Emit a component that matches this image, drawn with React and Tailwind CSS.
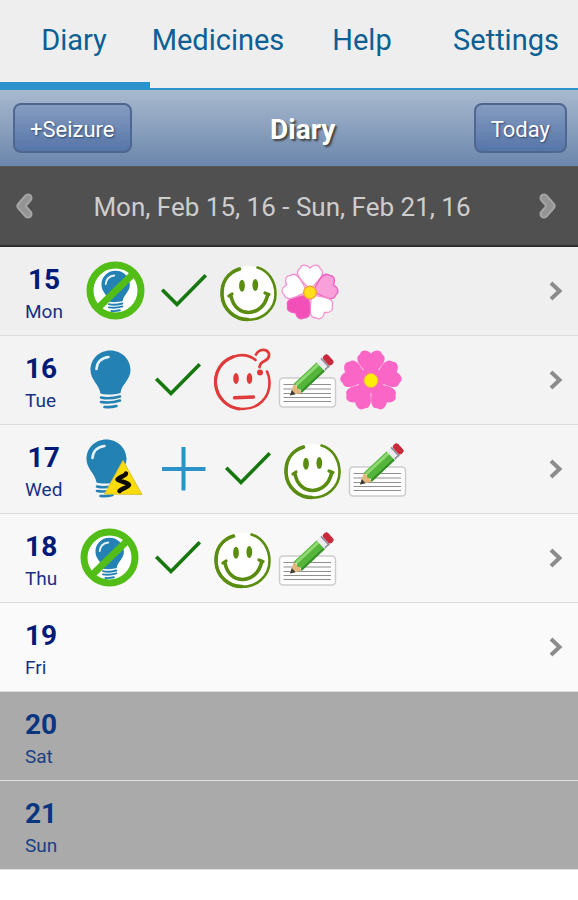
import React from 'react';

const TABS = ['Diary', 'Medicines', 'Help', 'Settings'];

const DAYS = [
  { date: 15, weekday: 'Mon', icons: ['noSeizure', 'check', 'happy', 'mixedFlower'], bg: 'bg-[#efefef]' },
  { date: 16, weekday: 'Tue', icons: ['bulb', 'check', 'unsure', 'note', 'flower'], bg: 'bg-[#f3f3f3]' },
  { date: 17, weekday: 'Wed', icons: ['seizure', 'plus', 'check', 'happy', 'note'], bg: 'bg-[#f5f5f5]' },
  { date: 18, weekday: 'Thu', icons: ['noSeizure', 'check', 'happy', 'note'], bg: 'bg-[#f8f8f8]' },
  { date: 19, weekday: 'Fri', icons: [], bg: 'bg-[#fafafa]' },
  { date: 20, weekday: 'Sat', icons: [], future: true },
  { date: 21, weekday: 'Sun', icons: [], future: true },
];

const BulbShape = () => (
  <g>
    <path
      d="M30.3 .5C18.500 .5 10.500 9.500 10.500 20C10.500 30 19 34 20.500 43.500C26 45.500 35 44.500 40.500 43C41.500 34 50.500 30 50.500 20C50.500 9.500 42 .5 30.300 .5Z"
      fill="#2382b3"
    />
    <path d="M16.500 19C17 12 21.500 8 28.500 7" fill="none" stroke="#e8f3f8" strokeWidth="2.600" strokeLinecap="round" />
    <path
      d="M21 47.500Q29 49.500 40 46.500M21 52Q31 53.500 40 50.500M24.500 57Q31 57.500 36.500 56"
      fill="none"
      stroke="#2382b3"
      strokeWidth="2.600"
      strokeLinecap="round"
    />
  </g>
);

const Bulb = () => <BulbShape />;

const NoSeizure = () => (
  <g>
    <circle cx="29.500" cy="29.500" r="25.500" fill="#fff" />
    <g transform="translate(8 9.500) scale(.71)">
      <BulbShape />
    </g>
    <path d="M12 47L47.500 12.500" stroke="#52bd17" strokeWidth="7" />
    <circle cx="29.500" cy="29.500" r="25.500" fill="none" stroke="#52bd17" strokeWidth="7" />
  </g>
);

const Seizure = () => (
  <g>
    <g transform="translate(-9 0)">
      <BulbShape />
    </g>
    <path d="M38 21.500L57 55.500L19.500 55Z" fill="#f9dc0b" stroke="#d9c23a" strokeWidth="1" strokeLinejoin="round" />
    <path
      d="M41 34.500C40.500 37 34 38 32.500 40.500C34 42.500 44 43.500 44 46C43 48.500 36 49.500 34.500 52"
      fill="none"
      stroke="#0c0a02"
      strokeWidth="4.500"
      strokeLinecap="round"
      strokeLinejoin="round"
    />
  </g>
);

const Check = () => (
  <path d="M9.500 30L23 43.500L50.500 15.500" fill="none" stroke="#16770f" strokeWidth="3.600" strokeLinecap="square" />
);

const Plus = () => <path d="M9 30H52.500M30.500 8V51.500" fill="none" stroke="#2b93c8" strokeWidth="4" />;

const Happy = () => (
  <g fill="none" stroke="#5b8c12" strokeLinecap="round">
    <circle cx="29.500" cy="32" r="27" fill="#fff" stroke="none" />
    <path d="M20.500 8C9 12 2.700 21 3 33C3.500 48 15 58.700 29.500 58.700C44 58.700 56.500 48 56.500 33C56.500 20 49 9.500 38.500 6.500" strokeWidth="2.600" />
    <path d="M20.500 8C8 12 2.500 22 3 34C4 49 16 58.500 29 58.500" strokeWidth="3.600" />
    <path d="M12 35C14 45.500 21 51.500 29.500 51.500C38.500 51.500 46 45 48.500 34.500" strokeWidth="3.600" />
    <path d="M10 35L13 33M46 32L50 33.500" strokeWidth="3.200" />
    <ellipse cx="23" cy="24.700" rx="2.900" ry="6" fill="#5b8c12" stroke="none" />
    <ellipse cx="36.300" cy="24" rx="2.900" ry="6" fill="#5b8c12" stroke="none" />
  </g>
);

const Unsure = () => (
  <g fill="none" stroke="#e03a3a" strokeLinecap="round">
    <path d="M42.500 10C37 5.500 31 4.500 25 5.500C11 8 2 19 2.500 33C3.500 48 15 59 29.500 59C45 59 57 48 56.500 32C56.500 28 55.500 24.500 54 21.500" strokeWidth="2.600" />
    <path d="M20 7C8 11 2 22 2.500 34C4 48 14 57 26 59" strokeWidth="3.200" />
    <path d="M43 4.500C45 0 50 -1 53.500 .5C58 4 56 9 51.500 11C48 12.500 47 14 46.500 17" strokeWidth="2.800" />
    <circle cx="47" cy="22.500" r="3" fill="#e03a3a" stroke="none" />
    <ellipse cx="23" cy="28.500" rx="2.800" ry="5.400" fill="#e03a3a" stroke="none" />
    <ellipse cx="36.500" cy="28.500" rx="2.800" ry="5.400" fill="#e03a3a" stroke="none" />
    <path d="M21.500 47.800L40.500 47" strokeWidth="3.400" />
  </g>
);

const Note = () => (
  <g>
    <rect x="1.500" y="28" width="56" height="29" rx="3.500" fill="#fdfdfd" stroke="#cdcdcd" strokeWidth="1.500" />
    <path d="M5.500 34.500H53M5.500 39H53M5.500 43.500H53M5.500 47.500H53M5.500 51.500H53" stroke="#8f8f8f" strokeWidth="1.200" />
    <g transform="translate(12 45.500) rotate(-43)">
      <path d="M0 0L11 -6V6Z" fill="#e3b77c" />
      <path d="M0 0L5 -2.800V2.800Z" fill="#3b3b3b" />
      <path d="M10 -6H43V6H10L12 3L10 0L12 -3Z" fill="#55b53a" />
      <path d="M12 -3.500H43" stroke="#8ed873" strokeWidth="3" />
      <path d="M11 5H43" stroke="#348f28" strokeWidth="2" />
      <rect x="42" y="-6" width="7" height="12" fill="#ececf0" />
      <path d="M48 -6V6M43 5H49" stroke="#8d8d9a" strokeWidth="1.500" />
      <rect x="49" y="-6" width="6.500" height="12" rx="2.500" fill="#c8293c" />
    </g>
  </g>
);

const PETAL = 'M0 -3C-4 -8 -8 -11 -11.500 -16C-14 -19.500 -14 -23 -13 -24.500C-11 -26 -11 -27 -9.500 -29C-6.500 -31 -2.500 -29.500 0 -27C2.500 -29.500 6.500 -31 9.500 -29C11 -27 11 -26 13 -24.500C14 -23 14 -19.500 11.500 -16C8 -11 4 -8 0 -3Z';

const Flower = () => (
  <g transform="translate(28 30.500)">
    {[0, 72, 144, 216, 288].map((angle) => (
      <path key={angle} d={PETAL} transform={`rotate(${angle})`} fill="#f966c6" />
    ))}
    <circle r="13" fill="#f966c6" />
    <circle r="7" fill="#ffee0a" stroke="#f5a650" strokeWidth="1" />
  </g>
);

const MixedFlower = () => {
  const petals = ['#ffffff', '#f9a0da', '#ffffff', '#f24fb8', '#ffffff'];
  return (
    <g transform="translate(26 31.500) scale(.91)">
      {petals.map((fill, i) => (
        <path
          key={i}
          d={PETAL}
          transform={`rotate(${i * 72})`}
          fill={fill}
          stroke={fill === '#ffffff' ? '#f592d2' : '#f05fbe'}
          strokeWidth="1.500"
        />
      ))}
      <circle r="7" fill="#ffdf1c" stroke="#f3a13a" strokeWidth="1.500" />
    </g>
  );
};

const ICONS = {
  bulb: Bulb,
  noSeizure: NoSeizure,
  seizure: Seizure,
  check: Check,
  plus: Plus,
  happy: Happy,
  unsure: Unsure,
  note: Note,
  flower: Flower,
  mixedFlower: MixedFlower,
};

const DayIcon = ({ name }) => {
  const Shape = ICONS[name];
  return (
    <svg viewBox="0 0 60 60" className="size-[60px] shrink-0 overflow-visible first:mr-[3px]" aria-hidden="true">
      <Shape />
    </svg>
  );
};

const Arrow = ({ flip }) => (
  <svg viewBox="0 0 18 28" className={flip ? 'w-[18px] h-7 -scale-x-100' : 'w-[18px] h-7'} aria-hidden="true">
    <g fill="none" strokeLinecap="round" strokeLinejoin="round">
      <path d="M5 6L12 14L5 22" stroke="#a6a6a6" strokeWidth="9" />
      <path d="M5 6L12 14L5 22" stroke="#949494" strokeWidth="5" />
    </g>
  </svg>
);

const HeaderButton = ({ children }) => (
  <button
    type="button"
    className="h-[50px] rounded-lg border-2 border-[#4f6690] bg-linear-to-b from-[#859cc0] to-[#5675a8] px-[15px] pt-0.5 text-[22px] text-white [text-shadow:1px_1px_2px_#33466b]"
  >
    {children}
  </button>
);

const DayLabel = ({ day }) => (
  <span className="flex flex-col pt-1.5">
    <span className="text-center text-[28px] leading-9 font-bold">{day.date}</span>
    <span className="text-[19px] leading-7 opacity-90">{day.weekday}</span>
  </span>
);

const DayRow = ({ day }) => {
  if (day.future) {
    return (
      <li className="flex h-[89px] items-center border-b border-[#dedede] bg-[#aaaaaa] pl-[25px] text-[#0a3580]">
        <DayLabel day={day} />
      </li>
    );
  }
  return (
    <li className={`${day.bg} border-b border-[#dcdcdc] text-[#001a78]`}>
      <button type="button" className="flex h-[88px] w-full items-center pl-[25px] pr-[15px] text-left">
        <DayLabel day={day} />
        <span className="ml-[23px] flex grow items-center gap-[5px]">
          {day.icons.map((name, i) => (
            <DayIcon key={i} name={name} />
          ))}
        </span>
        <svg viewBox="0 0 14 20" className="h-5 w-3.5 shrink-0" aria-hidden="true">
          <path d="M2 2L10.500 10L2 18" fill="none" stroke="#8c8c8c" strokeWidth="4" />
        </svg>
      </button>
    </li>
  );
};

const App = () => {
  return (
    <div className="min-h-screen bg-white font-['Roboto','Liberation_Sans',sans-serif]">
      <nav className="border-b-2 border-[#2b93c9] bg-[#eeeeee]">
        <div className="grid h-[82px] grid-cols-4 pl-0.5">
          {TABS.map((tab) => (
            <a key={tab} href="#" className="flex items-center justify-center text-[29px] text-[#0c5f93]">
              {tab}
            </a>
          ))}
        </div>
        <div className="h-1.5 w-[26%] bg-[#2b93c9]" />
      </nav>

      <header className="flex h-[76px] items-center justify-between bg-linear-to-b from-[#a9b9cf] to-[#6b87ac] pl-[13px] pr-[11px]">
        <HeaderButton>+Seizure</HeaderButton>
        <h1 className="pt-1 text-[28px] font-bold text-white [text-shadow:2px_2px_2px_#444444]">Diary</h1>
        <HeaderButton>Today</HeaderButton>
      </header>

      <div className="flex h-[81px] items-center justify-between border-t border-b-2 border-t-[#5c5656] border-b-[#2e2e2e] bg-[#505050] pl-[15px] pr-[21px]">
        <button type="button" aria-label="Previous week">
          <Arrow flip />
        </button>
        <p className="pt-0.5 pr-2 text-[26px] text-[#cdcdcd]">Mon, Feb 15, 16 - Sun, Feb 21, 16</p>
        <button type="button" aria-label="Next week">
          <Arrow />
        </button>
      </div>

      <ul>
        {DAYS.map((day) => (
          <DayRow key={day.date} day={day} />
        ))}
      </ul>
    </div>
  );
};

export default App;
